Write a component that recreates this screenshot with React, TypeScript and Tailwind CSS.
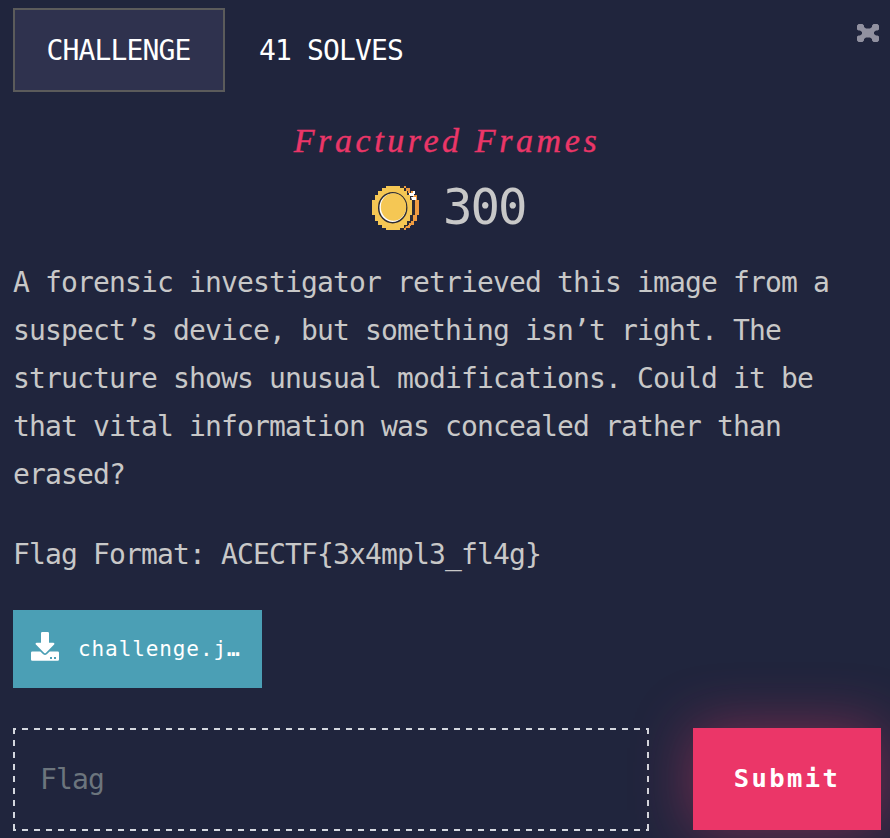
const mono = "font-['DejaVu_Sans_Mono',monospace]";

// Four evenly spaced dashed edges: top, bottom, left, right.
const dashedFrame =
  "bg-[image:linear-gradient(90deg,#d3d7de_50%,transparent_50%),linear-gradient(90deg,#d3d7de_50%,transparent_50%),linear-gradient(#d3d7de_50%,transparent_50%),linear-gradient(#d3d7de_50%,transparent_50%)] [background-size:12px_2px,12px_2px,2px_12px,2px_12px] [background-position:-3px_0,-3px_100%,0_0,100%_0] [background-repeat:repeat-x,repeat-x,repeat-y,repeat-y]";

function CoinIcon() {
  return (
    <svg width="48" height="46" viewBox="0 0 48 46" aria-hidden="true">
      <path fill="#f09c42" d="M26 1h8v2h4v3h4v4h3v5h2v15h-2v6h-3v4h-4v3h-4v2h-8z" />
      <path fill="#2e2c33" d="M28 1h4v2h4v3h3v4h2v5h2v15h-2v6h-2v4h-3v3h-4v2h-4z" />
      <path fill="#f09c42" d="M34 41h3v-3h2v3h-2v2h-4zM34 3h2v2h2v3h-2V6h-2z" />
      <path fill="#ffffff" d="M37 8h5v3h-5zM39 12h5v3h-4zM41 6h2v3h-2z" />
      <path fill="#f5c754" d="M14 1h14v2h4v3h3v4h3v5h2v15h-2v6h-3v4h-3v3h-4v2H14v-2h-4v-3H6v-4H3v-6H0V15h3v-5h3V6h4V3h4z" />
      <ellipse cx="20.700" cy="22.700" rx="14" ry="15" fill="#ffffff" stroke="#2e2c33" strokeWidth="1.500" />
      <ellipse cx="21.500" cy="22" rx="12.700" ry="13.700" fill="#f5c754" />
    </svg>
  );
}

function CloseIcon() {
  return (
    <svg width="22" height="18" viewBox="0 0 22 18" aria-hidden="true">
      <path fill="#9191a0" d="M1.500 0h4L7 1.500V3l2 1.500h4L15 3V1.500L16.500 0h4L22 1.500v4L20.500 6.500h-1.500L17 8v2l2 1.500h1.500l1.500 1v4L20.500 18h-4L15 16.500V15l-2-1.500H9L7 15v1.500L5.500 18h-4L0 16.500v-4l1.500-1H3L5 10V8L3 6.500H1.500L0 5.500v-4z" />
    </svg>
  );
}

function DownloadIcon() {
  return (
    <svg width="28" height="29" viewBox="0 0 28 29" fill="#fff" aria-hidden="true">
      <path d="M11.3 0h5.4q1.3 0 1.3 1.3v9.5h4.3c1.1 0 1.5 1.1.8 1.8l-8.3 8.3q-.8.7-1.6 0l-8.3-8.3c-.7-.7-.3-1.8.8-1.8H10V1.300Q10 0 11.300 0z" />
      <path fillRule="evenodd" d="M1.300 19.500h8l2.900 2.800q1.800 1.500 3.600 0l2.900-2.800h8q1.300 0 1.300 1.300v6.600q0 1.300-1.300 1.300H1.300Q0 28.700 0 27.400v-6.600q0-1.300 1.300-1.300zM19 25v2h2v-2zM23 25v2h2v-2z" />
    </svg>
  );
}

export default function App() {
  return (
    <main className={`h-[838px] w-[890px] overflow-hidden bg-[#20253d] pr-[9px] pl-[13px] pt-2 text-[28px] tracking-[-0.857px] text-[#c8c8c8] ${mono}`}>
      <header className="flex h-[84px] items-start text-white">
        <button className="h-[84px] w-[212px] border-2 border-[#5b5b5b] bg-[#2f324e] pt-0.5 pr-px">CHALLENGE</button>
        <span className="ml-[34px] leading-[86px]">41 SOLVES</span>
        <button className="mt-4 mr-0.5 ml-auto" aria-label="Close"><CloseIcon /></button>
      </header>

      <h1 className="mt-[23px] h-[53px] text-center font-['Liberation_Serif',serif] text-[34px] leading-[52px] tracking-[3.600px] text-[#eb3668] italic [-webkit-text-stroke:0.4px_#eb3668]">
        Fractured Frames
      </h1>
      <div className="mt-4 flex h-[48px] items-center gap-[23px] pl-[359px]">
        <CoinIcon />
        <span className="text-[49px] leading-[48px] tracking-[-2px]">300</span>
      </div>

      <div className="mt-[27px] leading-[48px] whitespace-nowrap">
        <p>
          A forensic investigator retrieved this image from a<br />
          suspect’s device, but something isn’t right. The<br />
          structure shows unusual modifications. Could it be<br />
          that vital information was concealed rather than<br />
          erased?
        </p>
        <p className="mt-8">Flag Format: ACECTF{"{"}3x4mpl3_fl4g{"}"}</p>
      </div>

      <button className="mt-[31px] flex h-[78px] w-[249px] items-center bg-[#4b9fb5] pl-[18px] text-[21px] tracking-[0.900px] text-white">
        <span className="mb-1.5"><DownloadIcon /></span>
        <span className="mt-0.5 ml-[19px]">challenge.j<b>…</b></span>
      </button>

      <form className="mt-10 flex items-start justify-between" onSubmit={(e) => e.preventDefault()}>
        <input
          className={`h-[103px] w-[636px] px-[27px] tracking-[-0.857px] outline-none placeholder:text-[#6c757d] ${dashedFrame}`}
          placeholder="Flag"
        />
        <button className="h-[102px] w-[188px] bg-[#eb3668] pb-0.5 text-[25.500px] font-bold tracking-[2.400px] text-white shadow-[0_0_60px_#eb366870]">
          Submit
        </button>
      </form>
    </main>
  );
}
